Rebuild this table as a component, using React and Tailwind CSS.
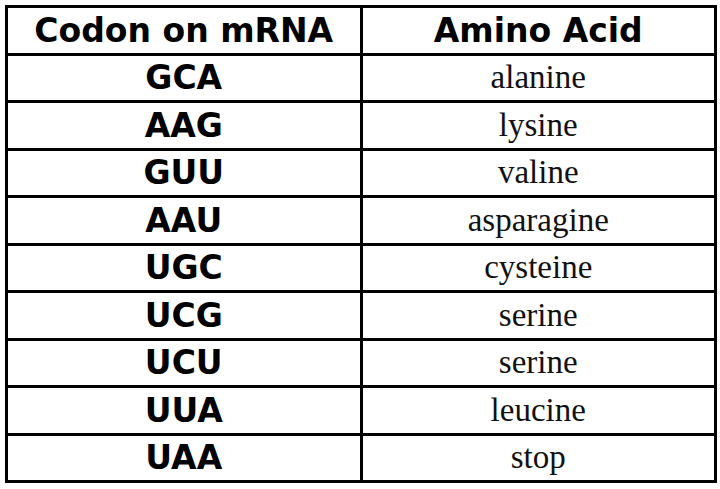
import React from "react";

const rows = [
  ["GCA", "alanine"],
  ["AAG", "lysine"],
  ["GUU", "valine"],
  ["AAU", "asparagine"],
  ["UGC", "cysteine"],
  ["UCG", "serine"],
  ["UCU", "serine"],
  ["UUA", "leucine"],
  ["UAA", "stop"],
];

export default function App() {
  return (
    <div className="w-[720px] h-[489px] bg-white pt-[5px] pl-[5px]">
      <div className="w-[712px] h-[478px] bg-black p-[3px] grid grid-cols-2 grid-rows-[repeat(10,minmax(0,1fr))] gap-x-[3px] gap-y-[3px]">
        <div className="bg-white flex items-center justify-center font-['DejaVu_Sans',sans-serif] font-bold text-[33px] text-black leading-none">
          Codon on mRNA
        </div>
        <div className="bg-white flex items-center justify-center font-['DejaVu_Sans',sans-serif] font-bold text-[33px] text-black leading-none">
          Amino Acid
        </div>
        {rows.map(([c, a], i) => (
          <React.Fragment key={i}>
            <div className="bg-white flex items-center justify-center font-['DejaVu_Sans',sans-serif] font-bold text-[33px] text-black leading-none">
              {c}
            </div>
            <div className="bg-white flex items-center justify-center font-['Liberation_Serif',serif] text-[33px] text-[#111] leading-none">
              {a}
            </div>
          </React.Fragment>
        ))}
      </div>
    </div>
  );
}
